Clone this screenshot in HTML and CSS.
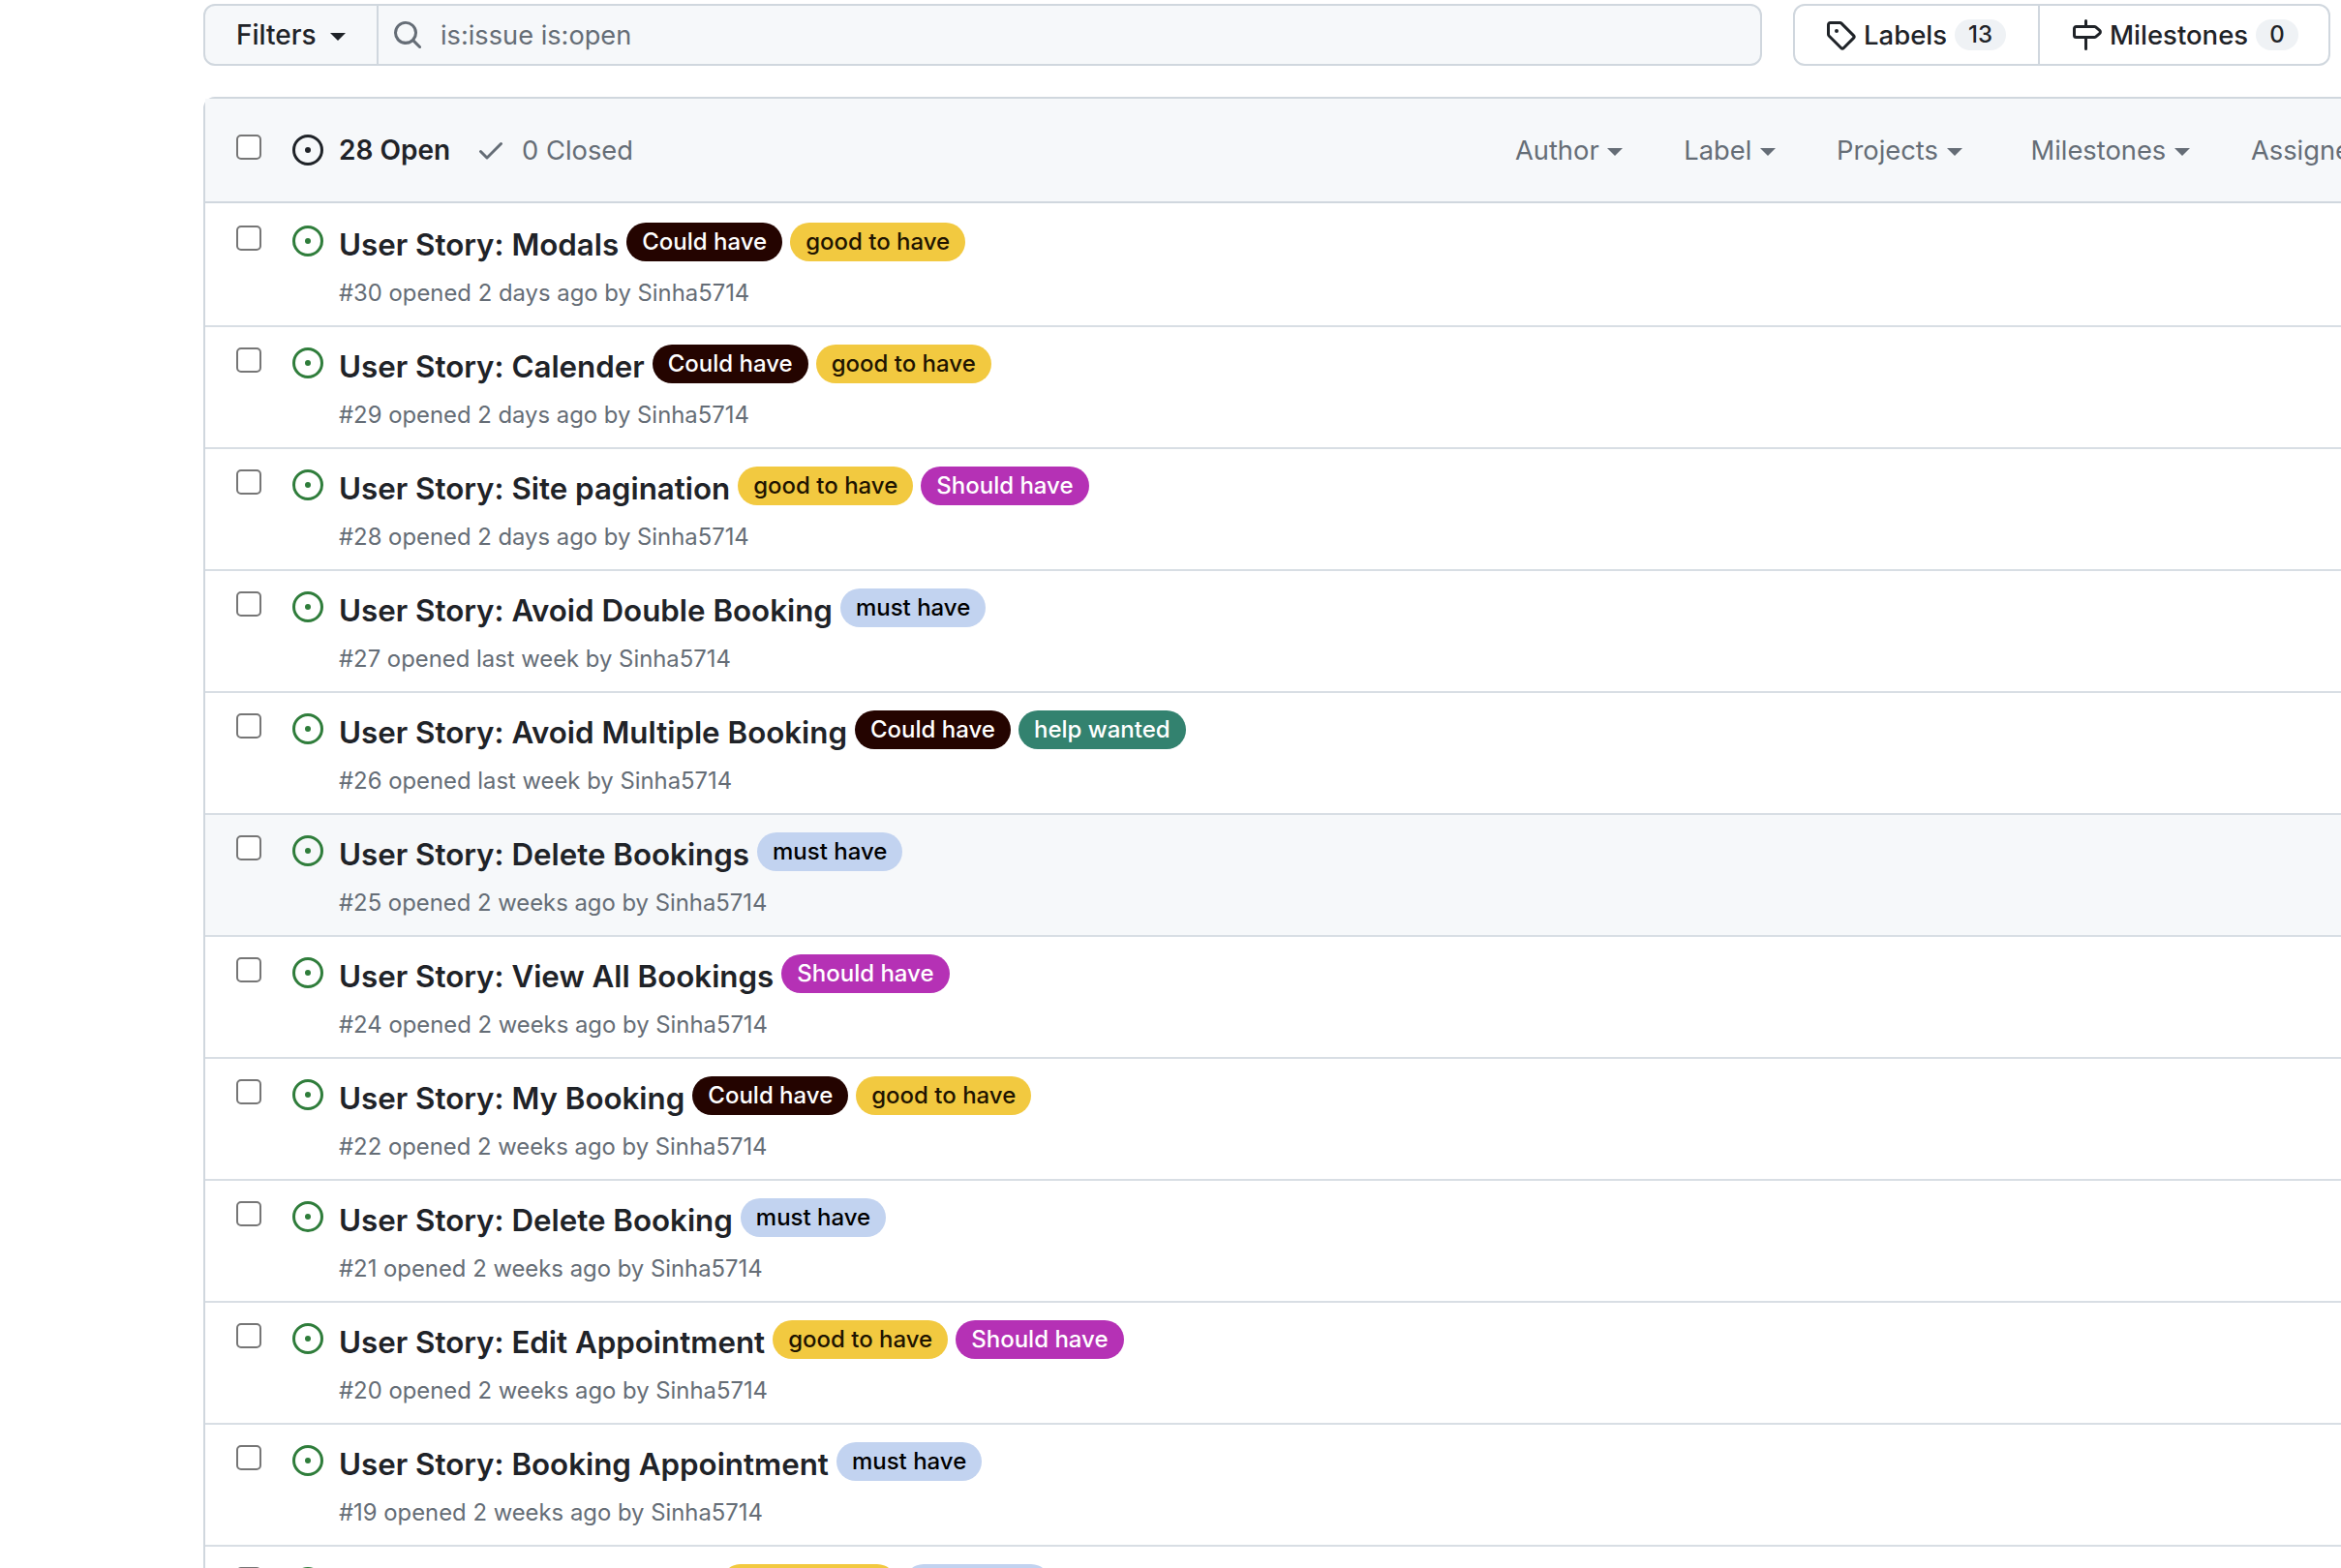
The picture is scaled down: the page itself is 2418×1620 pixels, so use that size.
FILE: index.html
```html
<!DOCTYPE html>
<html lang="en">
<head>
    <meta charset="UTF-8" />
    <title>Issues</title>
    <link rel="stylesheet" href="styles.css">
</head>
<body>
    <svg class="defs" width="0" height="0">
        <symbol id="icon-open" viewBox="0 0 16 16">
            <path d="M8 9.5a1.5 1.5 0 1 0 0-3 1.5 1.5 0 0 0 0 3Z"></path>
            <path d="M8 0a8 8 0 1 1 0 16A8 8 0 0 1 8 0ZM1.5 8a6.5 6.5 0 1 0 13 0 6.5 6.5 0 0 0-13 0Z"></path>
        </symbol>
    </svg>

    <div class="page">
        <div class="top-bar">
            <div class="search-group">
                <button class="filters">Filters <span class="caret"></span></button>
                <div class="search">
                    <svg class="search-icon" viewBox="0 0 16 16"><path d="M10.68 11.74a6 6 0 0 1-7.922-8.982 6 6 0 0 1 8.982 7.922l3.04 3.04a.749.749 0 0 1-.326 1.275.749.749 0 0 1-.734-.215ZM11.5 7a4.499 4.499 0 1 0-8.997 0A4.499 4.499 0 0 0 11.5 7Z"></path></svg>
                    <span>is:issue is:open</span>
                </div>
            </div>
            <div class="nav-group">
                <a class="nav-link">
                    <svg class="nav-icon" viewBox="0 0 16 16"><path d="M1 7.775V2.75C1 1.784 1.784 1 2.75 1h5.025c.464 0 .91.184 1.238.513l6.25 6.25a1.75 1.75 0 0 1 0 2.474l-5.026 5.026a1.75 1.75 0 0 1-2.474 0l-6.25-6.25A1.752 1.752 0 0 1 1 7.775Zm1.5 0c0 .066.026.13.073.177l6.25 6.25a.25.25 0 0 0 .354 0l5.025-5.025a.25.25 0 0 0 0-.354l-6.25-6.25a.25.25 0 0 0-.177-.073H2.75a.25.25 0 0 0-.25.25ZM6 5a1 1 0 1 1 0 2 1 1 0 0 1 0-2Z"></path></svg>
                    Labels <span class="counter">13</span>
                </a>
                <a class="nav-link">
                    <svg class="nav-icon" viewBox="0 0 16 16"><path d="M7.75 0a.75.75 0 0 1 .75.75V3h3.634c.414 0 .814.147 1.13.414l2.07 1.75a1.75 1.75 0 0 1 0 2.672l-2.07 1.75a1.75 1.75 0 0 1-1.13.414H8.5v5.25a.75.75 0 0 1-1.5 0V10H2.75A1.75 1.75 0 0 1 1 8.25v-3.5C1 3.784 1.784 3 2.75 3H7V.75A.75.75 0 0 1 7.75 0Zm4.384 8.5a.25.25 0 0 0 .161-.06l2.07-1.75a.248.248 0 0 0 0-.38l-2.07-1.75a.25.25 0 0 0-.161-.06H2.75a.25.25 0 0 0-.25.25v3.5c0 .138.112.25.25.25h9.384Z"></path></svg>
                    Milestones <span class="counter">0</span>
                </a>
            </div>
        </div>

        <div class="issues-box">
            <div class="box-header">
                <span class="check"></span>
                <div class="states">
                    <span class="state active"><svg class="state-icon"><use href="#icon-open"></use></svg>28 Open</span>
                    <span class="state">
                        <svg class="state-icon closed" viewBox="0 0 16 16"><path d="M13.78 4.22a.75.75 0 0 1 0 1.06l-7.25 7.25a.75.75 0 0 1-1.06 0L2.22 9.28a.751.751 0 0 1 .018-1.042.751.751 0 0 1 1.042-.018L6 10.94l6.72-6.72a.75.75 0 0 1 1.06 0Z"></path></svg>
                        0 Closed
                    </span>
                </div>
                <div class="box-filters">
                    <span>Author <i class="caret small"></i></span>
                    <span>Label <i class="caret small"></i></span>
                    <span class="projects">Projects <i class="caret small"></i></span>
                    <span>Milestones <i class="caret small"></i></span>
                    <span>Assignee <i class="caret small"></i></span>
                </div>
            </div>

            <div class="issue">
                <span class="check"></span>
                <svg class="open-icon"><use href="#icon-open"></use></svg>
                <div class="issue-body">
                    <div class="issue-title">User Story: Modals <span class="label could">Could have</span><span class="label good">good to have</span></div>
                    <div class="issue-meta">#30 opened 2 days ago by Sinha5714</div>
                </div>
            </div>
            <div class="issue">
                <span class="check"></span>
                <svg class="open-icon"><use href="#icon-open"></use></svg>
                <div class="issue-body">
                    <div class="issue-title">User Story: Calender <span class="label could">Could have</span><span class="label good">good to have</span></div>
                    <div class="issue-meta">#29 opened 2 days ago by Sinha5714</div>
                </div>
            </div>
            <div class="issue">
                <span class="check"></span>
                <svg class="open-icon"><use href="#icon-open"></use></svg>
                <div class="issue-body">
                    <div class="issue-title">User Story: Site pagination <span class="label good">good to have</span><span class="label should">Should have</span></div>
                    <div class="issue-meta">#28 opened 2 days ago by Sinha5714</div>
                </div>
            </div>
            <div class="issue">
                <span class="check"></span>
                <svg class="open-icon"><use href="#icon-open"></use></svg>
                <div class="issue-body">
                    <div class="issue-title">User Story: Avoid Double Booking <span class="label must">must have</span></div>
                    <div class="issue-meta">#27 opened last week by Sinha5714</div>
                </div>
            </div>
            <div class="issue">
                <span class="check"></span>
                <svg class="open-icon"><use href="#icon-open"></use></svg>
                <div class="issue-body">
                    <div class="issue-title">User Story: Avoid Multiple Booking <span class="label could">Could have</span><span class="label help">help wanted</span></div>
                    <div class="issue-meta">#26 opened last week by Sinha5714</div>
                </div>
            </div>
            <div class="issue hovered">
                <span class="check"></span>
                <svg class="open-icon"><use href="#icon-open"></use></svg>
                <div class="issue-body">
                    <div class="issue-title">User Story: Delete Bookings <span class="label must">must have</span></div>
                    <div class="issue-meta">#25 opened 2 weeks ago by Sinha5714</div>
                </div>
            </div>
            <div class="issue">
                <span class="check"></span>
                <svg class="open-icon"><use href="#icon-open"></use></svg>
                <div class="issue-body">
                    <div class="issue-title">User Story: View All Bookings <span class="label should">Should have</span></div>
                    <div class="issue-meta">#24 opened 2 weeks ago by Sinha5714</div>
                </div>
            </div>
            <div class="issue">
                <span class="check"></span>
                <svg class="open-icon"><use href="#icon-open"></use></svg>
                <div class="issue-body">
                    <div class="issue-title">User Story: My Booking <span class="label could">Could have</span><span class="label good">good to have</span></div>
                    <div class="issue-meta">#22 opened 2 weeks ago by Sinha5714</div>
                </div>
            </div>
            <div class="issue">
                <span class="check"></span>
                <svg class="open-icon"><use href="#icon-open"></use></svg>
                <div class="issue-body">
                    <div class="issue-title">User Story: Delete Booking <span class="label must">must have</span></div>
                    <div class="issue-meta">#21 opened 2 weeks ago by Sinha5714</div>
                </div>
            </div>
            <div class="issue">
                <span class="check"></span>
                <svg class="open-icon"><use href="#icon-open"></use></svg>
                <div class="issue-body">
                    <div class="issue-title">User Story: Edit Appointment <span class="label good">good to have</span><span class="label should">Should have</span></div>
                    <div class="issue-meta">#20 opened 2 weeks ago by Sinha5714</div>
                </div>
            </div>
            <div class="issue">
                <span class="check"></span>
                <svg class="open-icon"><use href="#icon-open"></use></svg>
                <div class="issue-body">
                    <div class="issue-title">User Story: Booking Appointment <span class="label must">must have</span></div>
                    <div class="issue-meta">#19 opened 2 weeks ago by Sinha5714</div>
                </div>
            </div>
            <div class="issue">
                <span class="check"></span>
                <svg class="open-icon"><use href="#icon-open"></use></svg>
                <div class="issue-body">
                    <div class="issue-title">User Story: Booking Form <span class="label good">good to have</span><span class="label must">must have</span></div>
                    <div class="issue-meta">#18 opened 2 weeks ago by Sinha5714</div>
                </div>
            </div>
        </div>
    </div>
</body>
</html>
```

FILE: styles.css
```css
* {
    margin: 0;
    padding: 0;
    box-sizing: border-box;
}

html, body {
    height: 1620px;
    overflow: hidden;
}

body {
    font-family: Inter, "Liberation Sans", sans-serif;
    background: white;
    color: #1f2328;
}

.defs {
    position: absolute;
}

.page {
    width: 2500px;
    padding: 4px 0 0 210px;
}

.top-bar {
    display: flex;
    width: 2197px;
    justify-content: space-between;
    height: 64px;
}

.search-group {
    display: flex;
    width: 1610px;
    background: #f6f8fa;
    border: 2px solid #d0d7de;
    border-radius: 12px;
}

.filters {
    display: flex;
    align-items: center;
    gap: 14px;
    width: 179px;
    padding-left: 32px;
    font: 500 28px Inter, sans-serif;
    color: #1f2328;
    background: none;
    border: none;
    border-right: 2px solid #d0d7de;
}

.caret {
    display: inline-block;
    border-top: 8px solid #1f2328;
    border-left: 8px solid transparent;
    border-right: 8px solid transparent;
    margin-top: 4px;
}

.caret.small {
    border-top-color: #656d76;
    border-width: 8px 8px 0;
    vertical-align: middle;
    margin: 0 0 0 1px;
}

.search {
    display: flex;
    align-items: center;
    gap: 18px;
    padding-left: 14px;
    font-size: 27.2px;
    color: #656d76;
}

.search-icon {
    width: 32px;
    height: 32px;
    fill: #656d76;
}

.nav-group {
    display: flex;
    width: 555px;
    border: 2px solid #d0d7de;
    border-radius: 12px;
}

.nav-link {
    display: flex;
    align-items: center;
    gap: 8px;
    width: 251px;
    padding-left: 31px;
    font-size: 27.5px;
    font-weight: 500;
    white-space: nowrap;
}

.nav-link + .nav-link {
    border-left: 2px solid #d0d7de;
    flex: 1;
    padding-left: 32px;
}

.nav-icon {
    width: 32px;
    height: 32px;
    fill: #1f2328;
}

.counter {
    padding: 0 14px;
    line-height: 32px;
    border-radius: 20px;
    background: #eff2f5;
    font-size: 24px;
    text-align: center;
}

.issues-box {
    width: 2500px;
    margin-top: 32px;
    border: 2px solid #d0d7de;
    border-radius: 12px 0 0 0;
}

.box-header {
    display: flex;
    align-items: center;
    height: 108px;
    padding: 0 0 0 32px;
    background: #f6f8fa;
    border-bottom: 2px solid #d0d7de;
    font-size: 27.3px;
}

.box-header .check {
    margin-top: -6px;
}

.states {
    display: flex;
    gap: 26px;
    margin-left: 32px;
}

.state {
    display: flex;
    align-items: center;
    gap: 16px;
    color: #656d76;
}

.state.active {
    color: #1f2328;
    font-size: 28px;
    font-weight: 600;
}

.state-icon {
    width: 32px;
    height: 32px;
    fill: #1f2328;
}

.state-icon.closed {
    fill: #656d76;
}

.box-filters {
    display: flex;
    gap: 63px;
    margin-left: 911px;
    color: #656d76;
    white-space: nowrap;
}

.projects {
    margin-right: 8px;
}

.check {
    flex: none;
    display: block;
    width: 26px;
    height: 26px;
    border: 2px solid #767676;
    border-radius: 5px;
    background: white;
}

.issue {
    display: flex;
    align-items: flex-start;
    height: 126px;
    padding: 21px 0 0 32px;
    border-bottom: 2px solid #d8dee4;
}

.box-header + .issue {
    height: 128px;
    padding-top: 23px;
}

.issue.hovered {
    background: #f6f8fa;
}

.open-icon {
    flex: none;
    width: 32px;
    height: 32px;
    margin-left: 32px;
    fill: #2f7d3b;
}

.issue-body {
    margin-left: 16px;
}

.issue-title {
    display: flex;
    align-items: flex-start;
    gap: 8px;
    font-size: 31.3px;
    font-weight: 600;
    line-height: 40px;
    white-space: nowrap;
}

.label {
    height: 40px;
    margin-top: -3px;
    padding: 0 16px;
    border-radius: 20px;
    font-size: 24px;
    font-weight: 500;
    line-height: 40px;
}

.could {
    background: #240400;
    color: white;
}

.good {
    background: #f2c940;
    color: #1f1400;
}

.should {
    background: #b531b5;
    color: white;
}

.must {
    background: #c2d3f0;
    color: black;
}

.help {
    background: #33826f;
    color: white;
}

.issue-meta {
    margin-top: 15px;
    font-size: 23.85px;
    line-height: 30px;
    color: #656d76;
}
```
